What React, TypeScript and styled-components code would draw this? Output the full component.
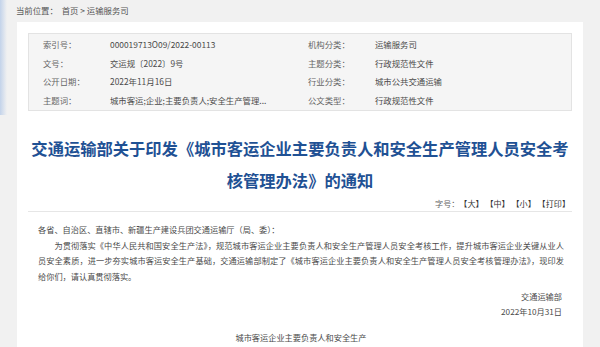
import { Fragment } from "react";
import styled, { createGlobalStyle } from "styled-components";

const GlobalStyle = createGlobalStyle`
    html, body {
        margin: 0;
        padding: 0;
    }
    body {
        background: linear-gradient(90deg, #c3d3ea 0, #f1f1f1 7px) no-repeat 0 0 / 7px 115px, #f1f1f1;
        font-family: "Noto Sans CJK SC", "Noto Sans", sans-serif;
        color: #333;
    }
`

const Page = styled.div`
    width: 600px;
    height: 347px;
    overflow: hidden;
    display: flex;
    flex-direction: column;
`

const Crumb = styled.div`
    height: 24px;
    padding: 0 16px;
    display: flex;
    align-items: center;
    margin-top: -2px;
    font-size: 8.4px;
    color: #555;
    white-space: pre;
`

const Panel = styled.div`
    flex: 1;
    margin: 0 17px;
    padding: 11px 11px 0;
    background-color: #fff;
`

const InfoBox = styled.div`
    display: grid;
    grid-template-columns: 265px 1fr;
    padding: 1px 0;
    background-color: #f5f5f5;
    border: 1px solid #e3e3e3;
`

const InfoCell = styled.div`
    display: flex;
    align-items: center;
    height: 18.5px;
    padding-left: 14px;
    font-size: 8.4px;
    white-space: nowrap;
`

const InfoLabel = styled.span`
    width: 67px;
    flex: none;
    color: #666;
`

const InfoValue = styled.span`
    color: #4a4a4a;
`

const Title = styled.h1`
    margin: 21px 0 0;
    font-size: 16.3px;
    line-height: 32px;
    font-weight: 700;
    color: #1f5194;
    text-align: center;
`

const SizeBar = styled.div`
    display: flex;
    justify-content: flex-end;
    align-items: center;
    height: 15px;
    padding-right: 2px;
    border-bottom: 1px solid #e6e6e6;
    font-size: 8.1px;
    color: #666;
    white-space: pre;
`

const SizeLink = styled.span`
    color: #333;
`

const Body = styled.div`
    padding: 10px 8px 0 10px;
    font-size: 8.2px;
    line-height: 15.5px;
    color: #4a4a4a;
`

const Para = styled.p<{ $indent?: boolean; $align?: string }>`
    margin: 0;
    text-indent: ${p => (p.$indent ? "2em" : "0")};
    text-align: ${p => p.$align ?? "justify"};
`

const Sign = styled.div`
    margin-top: 4.75px;
    padding-right: 2px;
    text-align: right;
`

const Caption = styled.p`
    margin: 10px 0 0;
    text-align: center;
`

const info: [string, string, string, string][] = [
    ["索引号：", "000019713O09/2022-00113", "机构分类：", "运输服务司"],
    ["文号：", "交运规〔2022〕9号", "主题分类：", "行政规范性文件"],
    ["公开日期：", "2022年11月16日", "行业分类：", "城市公共交通运输"],
    ["主题词：", "城市客运;企业;主要负责人;安全生产管理...", "公文类型：", "行政规范性文件"],
];

export default function App() {
    return (
        <>
            <GlobalStyle />
            <Page>
                <Crumb>当前位置：  首页 &gt; 运输服务司</Crumb>
                <Panel>
                    <InfoBox>
                        {info.map(row => (
                            <Fragment key={row[0]}>
                                <InfoCell>
                                    <InfoLabel>{row[0]}</InfoLabel>
                                    <InfoValue>{row[1]}</InfoValue>
                                </InfoCell>
                                <InfoCell>
                                    <InfoLabel>{row[2]}</InfoLabel>
                                    <InfoValue>{row[3]}</InfoValue>
                                </InfoCell>
                            </Fragment>
                        ))}
                    </InfoBox>

                    <Title>
                        交通运输部关于印发《城市客运企业主要负责人和安全生产管理人员安全考核管理办法》的通知
                    </Title>

                    <SizeBar>
                        字号：<SizeLink>【大】 【中】 【小】 【打印】</SizeLink>
                    </SizeBar>

                    <Body>
                        <Para $align="left">各省、自治区、直辖市、新疆生产建设兵团交通运输厅（局、委）：</Para>
                        <Para $indent>
                            为贯彻落实《中华人民共和国安全生产法》，规范城市客运企业主要负责人和安全生产管理人员安全考核工作，提升城市客运企业关键从业人员安全素质，进一步夯实城市客运安全生产基础，交通运输部制定了《城市客运企业主要负责人和安全生产管理人员安全考核管理办法》，现印发给你们，请认真贯彻落实。
                        </Para>
                        <Sign>
                            <div>交通运输部</div>
                            <div>2022年10月31日</div>
                        </Sign>
                        <Caption>城市客运企业主要负责人和安全生产</Caption>
                    </Body>
                </Panel>
            </Page>
        </>
    )
}
